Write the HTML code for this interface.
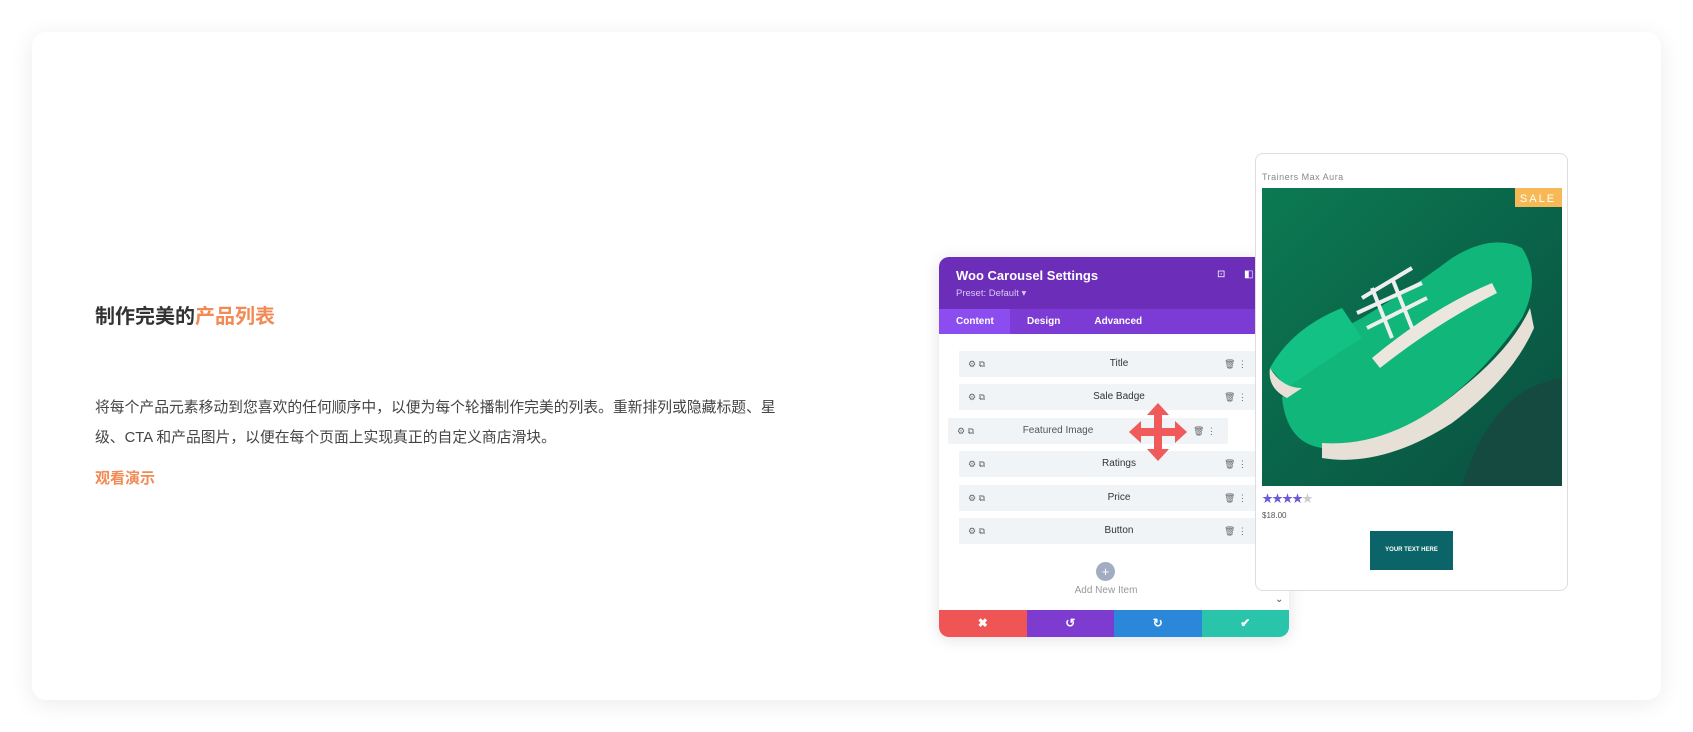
<!DOCTYPE html>
<html><head><meta charset="utf-8"><style>
*{margin:0;padding:0;box-sizing:border-box}
body{width:1693px;height:732px;background:#fff;position:relative;overflow:hidden;font-family:"Liberation Sans","Noto Sans CJK SC",sans-serif}
.card{position:absolute;left:32px;top:32px;width:1629px;height:668px;border-radius:14px;background:#fff;box-shadow:0 4px 24px rgba(0,0,0,.08);overflow:hidden}
.abs{position:absolute}
h2{position:absolute;left:95px;top:300px;font-size:20px;font-weight:bold;color:#333;white-space:nowrap}
h2 span{color:#f28a55}
p.d{position:absolute;left:95px;top:393px;width:700px;font-size:14.8px;line-height:30px;color:#444}
.lnk{position:absolute;left:95px;top:467px;font-size:15px;font-weight:bold;color:#f28a55}
.panel{position:absolute;left:939px;top:257px;width:350px;height:380px;border-radius:10px;background:#fff;overflow:hidden;box-shadow:0 2px 16px rgba(0,0,0,.12)}
.hd{height:52px;background:#6c2eb9;color:#fff;padding:11px 0 0 17px}
.hd b{font-size:13px;display:block}
.hd i{font-style:normal;font-size:9.5px;color:#dcc8f5}
.tabs{height:25px;background:#7c3bd4;display:flex;font-size:10px;font-weight:bold;color:#fff}
.tabs div{padding:7px 17px 0}
.tabs .a{background:#8c4df0;width:71px}
.row{position:absolute;height:26px;background:#f1f4f7;font-size:10px;color:#333;text-align:center;line-height:26px}
.ic{position:absolute;top:0;font-size:9px;color:#666}
.ft{position:absolute;bottom:0;left:0;width:350px;height:27px;display:flex}
.ft div{flex:1;color:#fff;text-align:center;line-height:27px;font-size:12px;font-weight:bold}
.prod{position:absolute;left:1255px;top:153px;width:313px;height:438px;border:1px solid #ddd;border-radius:8px;background:#fff}
</style></head><body>
<div class="card"></div>
<h2>制作完美的<span>产品列表</span></h2>
<p class="d">将每个产品元素移动到您喜欢的任何顺序中，以便为每个轮播制作完美的列表。重新排列或隐藏标题、星级、CTA 和产品图片，以便在每个页面上实现真正的自定义商店滑块。</p>
<div class="lnk">观看演示</div>

<div class="panel">
<div class="hd"><b>Woo Carousel Settings</b><i>Preset: Default ▾</i>
<span class="abs" style="left:278px;top:12px;font-size:10px">⊡</span><span class="abs" style="left:305px;top:12px;font-size:10px">◧</span></div>
<div class="tabs"><div class="a">Content</div><div>Design</div><div>Advanced</div></div>
<div class="row" style="left:20px;top:94px;width:320px">Title<span class="ic" style="left:9px">⚙ ⧉</span><span class="ic" style="left:265px">🗑 ⋮</span></div>
<div class="row" style="left:20px;top:127px;width:320px">Sale Badge<span class="ic" style="left:9px">⚙ ⧉</span><span class="ic" style="left:265px">🗑 ⋮</span></div>
<div class="row" style="left:9px;top:161px;width:280px;color:#555;padding-right:60px">Featured Image<span class="ic" style="left:9px">⚙ ⧉</span><span class="ic" style="left:245px">🗑 ⋮</span></div>
<div class="row" style="left:20px;top:194px;width:320px">Ratings<span class="ic" style="left:9px">⚙ ⧉</span><span class="ic" style="left:265px">🗑 ⋮</span></div>
<div class="row" style="left:20px;top:228px;width:320px">Price<span class="ic" style="left:9px">⚙ ⧉</span><span class="ic" style="left:265px">🗑 ⋮</span></div>
<div class="row" style="left:20px;top:261px;width:320px">Button<span class="ic" style="left:9px">⚙ ⧉</span><span class="ic" style="left:265px">🗑 ⋮</span></div>
<svg class="abs" style="left:190px;top:146px" width="58" height="58" viewBox="0 0 58 58"><path fill="#f05a5a" d="M29 0l11 12h-7v13h13v-7l12 11-12 11v-7H33v13h7L29 58 18 46h7V33H12v7L0 29l12-11v7h13V12h-7z"/></svg>
<div class="abs" style="left:157px;top:305px;width:19px;height:19px;border-radius:50%;background:#a3adc2;color:#fff;text-align:center;line-height:19px;font-size:13px">+</div>
<div class="abs" style="left:0;top:328px;width:334px;text-align:center;font-size:10px;color:#999">Add New Item</div>
<div class="abs" style="left:336px;top:337px;font-size:10px;color:#555">⌄</div>
<div class="ft"><div style="background:#ef5555">✖</div><div style="background:#7e3bd0">↺</div><div style="background:#2b87da">↻</div><div style="background:#29c4a9">✔</div></div>
</div>

<div class="prod">
<div class="abs" style="left:6px;top:18px;font-size:9px;color:#888;letter-spacing:.5px">Trainers Max Aura</div>
<svg class="abs" style="left:6px;top:34px" width="300" height="298" viewBox="0 0 300 298">
<defs><linearGradient id="g" x1="0" y1="0" x2="1" y2="1"><stop offset="0" stop-color="#0c7a52"/><stop offset=".5" stop-color="#0a6449"/><stop offset="1" stop-color="#0a5040"/></linearGradient></defs>
<rect width="300" height="298" fill="url(#g)"/>
<path d="M300 190 Q230 200 200 298 H300Z" fill="#154a40"/>
<path d="M20 210 Q40 160 100 130 Q150 100 190 70 Q230 45 260 60 Q280 90 260 130 Q220 190 160 230 Q100 265 60 260 Q25 255 20 210Z" fill="#10b67a"/>
<path d="M60 255 Q130 260 200 200 Q250 160 268 120 L272 140 Q250 190 190 235 Q120 280 60 270Z" fill="#e6e0d6"/>
<path d="M8 180 Q30 140 80 120 L100 150 Q60 175 25 200Z" fill="#13c184"/>
<path d="M8 180 Q20 200 40 200 L25 210 Q5 200 8 180Z" fill="#e6e0d6"/>
<path d="M110 170 Q170 120 230 95 L235 105 Q175 135 118 180Z" fill="#ece7de"/>
<path d="M100 110 L150 80 M95 125 L160 95 M105 140 L165 110 M110 100 L130 150 M130 90 L150 140" stroke="#eee" stroke-width="4" fill="none"/>
<rect x="253" y="0" width="47" height="19" fill="#f7b955"/>
<text x="276" y="14" font-size="11" fill="#fff" text-anchor="middle" letter-spacing="2" font-family="Liberation Sans">SALE</text>
</svg>
<div class="abs" style="left:6px;top:336px;font-size:11px;color:#6a5ad8;letter-spacing:-1px">★★★★<span style="color:#ccc">★</span></div>
<div class="abs" style="left:6px;top:357px;font-size:8px;color:#555">$18.00</div>
<div class="abs" style="left:114px;top:377px;width:83px;height:39px;background:#0b6468;color:#fff;font-size:6px;font-weight:bold;text-align:center;line-height:39px">YOUR TEXT HERE</div>
</div>
</body></html>
